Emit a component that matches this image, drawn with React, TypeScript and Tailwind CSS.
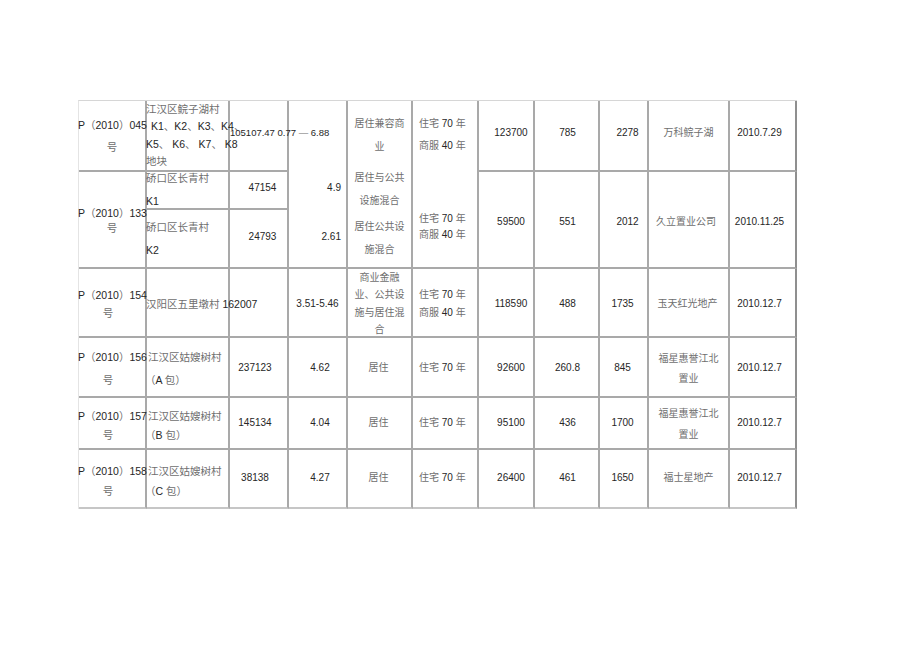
import React from "react";

// split a string into latin / cjk runs so the two scripts get their own tone
const T = ({ t }: { t: string }) => (
  <>
    {t
      .split(/([\x00-\x7f]+)/)
      .filter(Boolean)
      .map((s, i) =>
        /^[\x00-\x7f]+$/.test(s) ? (
          <span key={i} className="text-[#262626]">
            {s}
          </span>
        ) : (
          <span key={i} className="text-[#6e6e6e]">
            {s}
          </span>
        ),
      )}
  </>
);

const line = "border-r-2 border-b-2 border-[#a9a9a9]";

const Cell = ({
  className,
  children,
}: {
  className: string;
  children?: React.ReactNode;
}) => <div className={`${line} flex flex-col whitespace-nowrap ${className}`}>{children}</div>;

const Num = ({ className, v }: { className: string; v: string }) => (
  <Cell className={`items-center justify-center text-[10px] leading-[14px] ${className}`}>
    <T t={v} />
  </Cell>
);

const App = () => {
  return (
    <div className="min-h-[651px] bg-white pt-[100px] pl-[78px] font-['Liberation_Sans','Noto_Sans_CJK_SC',sans-serif]">
      <div className="grid w-fit grid-cols-[68px_83px_59px_59px_65px_66px_56px_65px_49px_81px_67px] grid-rows-[71px_38px_59px_69px_60px_52px_59px] border-t border-l border-t-[#d6d6d6] border-l-[#e4e4e4]">
        {/* row 1 */}
        <Cell className="col-start-1 row-start-1 justify-center text-[10.5px] leading-[22px]">
          <div className="-ml-px">
            <T t="P（2010）045" />
          </div>
          <div className="text-center">
            <T t="号" />
          </div>
        </Cell>
        <Cell className="col-start-2 row-start-1 justify-center text-[10.5px] leading-[17.5px]">
          <div className="-ml-px">
            <T t="江汉区鲩子湖村" />
          </div>
          <div className="pl-[4px]">
            <T t="K1、K2、K3、K4、" />
          </div>
          <div className="-ml-px">
            <T t="K5、 K6、 K7、 K8" />
          </div>
          <div className="-ml-px">
            <T t="地块" />
          </div>
        </Cell>
        <Cell className="col-start-3 row-start-1 justify-center pb-[5px] text-[9.5px] leading-[12px]">
          <div>
            <T t="105107.47 0.77  — 6.88" />
          </div>
        </Cell>
        <Cell className="col-start-4 row-start-1 row-span-3 items-end pt-[80px] pr-[5px] text-[10px] leading-[14px]">
          <div>
            <T t="4.9" />
          </div>
          <div className="mt-[35px]">
            <T t="2.61" />
          </div>
        </Cell>
        <Cell className="col-start-5 row-start-1 row-span-3 items-center pt-[11px] text-[10px] leading-[23px]">
          <div className="text-center">
            <div><T t="居住兼容商" /></div>
            <div><T t="业" /></div>
          </div>
          <div className="mt-[8px] text-center">
            <div><T t="居住与公共" /></div>
            <div><T t="设施混合" /></div>
          </div>
          <div className="mt-[3px] text-center">
            <div><T t="居住公共设" /></div>
            <div><T t="施混合" /></div>
          </div>
        </Cell>
        <Cell className="col-start-6 row-start-1 row-span-3 pt-[12px] pl-[6px] text-[10px]">
          <div className="leading-[22px]">
            <div><T t="住宅 70 年" /></div>
            <div><T t="商服 40 年" /></div>
          </div>
          <div className="mt-[54px] leading-[16px]">
            <div><T t="住宅 70 年" /></div>
            <div><T t="商服 40 年" /></div>
          </div>
        </Cell>
        <Num className="col-start-7 row-start-1 pb-[6px] pl-[10px]" v="123700" />
        <Num className="col-start-8 row-start-1 pb-[6px] pl-[2px]" v="785" />
        <Num className="col-start-9 row-start-1 pb-[6px] pl-[8px]" v="2278" />
        <Num className="col-start-10 row-start-1 pb-[6px]" v="万科鲩子湖" />
        <Num className="col-start-11 row-start-1 pb-[6px] pr-[6px] border-r-[#8f8f8f]" v="2010.7.29" />

        {/* row 2 : two sub rows */}
        <Cell className="col-start-1 row-start-2 row-span-2 justify-center pt-[3px] text-[10.5px] leading-[15px]">
          <div className="-ml-px">
            <T t="P（2010）133" />
          </div>
          <div className="text-center">
            <T t="号" />
          </div>
        </Cell>
        <Cell className="col-start-2 row-start-2 justify-center text-[10.5px] leading-[23px]">
          <div className="-ml-px"><T t="硚口区长青村" /></div>
          <div className="-ml-px"><T t="K1" /></div>
        </Cell>
        <Num className="col-start-3 row-start-2 pb-[4px] pl-[8px]" v="47154" />
        <Cell className="col-start-2 row-start-3 justify-center text-[10.5px] leading-[23px]">
          <div className="-ml-px"><T t="硚口区长青村" /></div>
          <div className="-ml-px"><T t="K2" /></div>
        </Cell>
        <Num className="col-start-3 row-start-3 pb-[3px] pl-[8px]" v="24793" />
        <Num className="col-start-7 row-start-2 row-span-2 pt-[4px] pl-[10px]" v="59500" />
        <Num className="col-start-8 row-start-2 row-span-2 pt-[4px] pl-[2px]" v="551" />
        <Num className="col-start-9 row-start-2 row-span-2 pt-[4px] pl-[8px]" v="2012" />
        <Num className="col-start-10 row-start-2 row-span-2 pt-[4px] pr-[5px]" v="久立置业公司" />
        <Num className="col-start-11 row-start-2 row-span-2 pt-[4px] pr-[6px] border-r-[#8f8f8f]" v="2010.11.25" />

        {/* row 3 */}
        <Cell className="col-start-1 row-start-4 justify-center pt-[2px] text-[10.5px] leading-[18px]">
          <div className="-ml-px"><T t="P（2010）154" /></div>
          <div className="pr-[8px] text-center"><T t="号" /></div>
        </Cell>
        <Cell className="col-start-2 row-start-4 justify-center pt-[2px] text-[10.5px] leading-[14px]">
          <div className="-ml-px"><T t="汉阳区五里墩村 162007" /></div>
        </Cell>
        <Cell className="col-start-3 row-start-4" />
        <Num className="col-start-4 row-start-4 pt-[2px]" v="3.51-5.46" />
        <Cell className="col-start-5 row-start-4 items-center justify-center pt-[2px] text-[10px] leading-[17.5px]">
          <div><T t="商业金融" /></div>
          <div><T t="业、公共设" /></div>
          <div><T t="施与居住混" /></div>
          <div><T t="合" /></div>
        </Cell>
        <Cell className="col-start-6 row-start-4 justify-center pt-[2px] pl-[6px] text-[10px] leading-[18px]">
          <div><T t="住宅 70 年" /></div>
          <div><T t="商服 40 年" /></div>
        </Cell>
        <Num className="col-start-7 row-start-4 pt-[2px] pl-[10px]" v="118590" />
        <Num className="col-start-8 row-start-4 pt-[2px] pl-[2px]" v="488" />
        <Num className="col-start-9 row-start-4 pt-[2px] pr-[2px]" v="1735" />
        <Num className="col-start-10 row-start-4 pt-[2px] pr-[2px]" v="玉天红光地产" />
        <Num className="col-start-11 row-start-4 pt-[2px] pr-[6px] border-r-[#8f8f8f]" v="2010.12.7" />

        {/* rows 4-6 : 姑嫂树村 */}
        {[
          {
            r: "row-start-5",
            no: "P（2010）156",
            pack: "（A 包）",
            lh: "leading-[23px] pt-[4px]",
            pad: "pt-[1px]",
            a: "237123",
            b: "4.62",
            c: "92600",
            d: "260.8",
            e: "845",
            f: ["福星惠誉江北", "置业"],
            flh: "leading-[20px] pt-[3px]",
          },
          {
            r: "row-start-6",
            no: "P（2010）157",
            pack: "（B 包）",
            lh: "leading-[19px] pt-[6px]",
            pad: "",
            a: "145134",
            b: "4.04",
            c: "95100",
            d: "436",
            e: "1700",
            f: ["福星惠誉江北", "置业"],
            flh: "leading-[21px] pt-[2px]",
          },
          {
            r: "row-start-7",
            no: "P（2010）158",
            pack: "（C 包）",
            lh: "leading-[20px] pt-[4px]",
            pad: "pb-[2px]",
            a: "38138",
            b: "4.27",
            c: "26400",
            d: "461",
            e: "1650",
            f: ["福士星地产"],
            flh: "leading-[14px] pb-[2px]",
          },
        ].map((row, i) => {
          const last = i === 2 ? "border-b-[#c6c6c6]" : "";
          return (
            <React.Fragment key={row.no}>
              <Cell className={`col-start-1 ${row.r} ${last} justify-center text-[10.5px] ${row.lh}`}>
                <div className="-ml-px"><T t={row.no} /></div>
                <div className="pr-[8px] text-center"><T t="号" /></div>
              </Cell>
              <Cell className={`col-start-2 ${row.r} ${last} justify-center pl-px text-[10.5px] ${row.lh}`}>
                <div><T t="江汉区姑嫂树村" /></div>
                <div className="-ml-[3px]"><T t={row.pack} /></div>
              </Cell>
              <Num className={`col-start-3 ${row.r} ${last} pr-[7px] ${row.pad}`} v={row.a} />
              <Num className={`col-start-4 ${row.r} ${last} pl-[5px] ${row.pad}`} v={row.b} />
              <Num className={`col-start-5 ${row.r} ${last} pr-[2px] ${row.pad}`} v="居住" />
              <Cell className={`col-start-6 ${row.r} ${last} justify-center pl-[6px] text-[10px] leading-[14px] ${row.pad}`}>
                <div><T t="住宅 70 年" /></div>
              </Cell>
              <Num className={`col-start-7 ${row.r} ${last} pl-[10px] ${row.pad}`} v={row.c} />
              <Num className={`col-start-8 ${row.r} ${last} pl-[2px] ${row.pad}`} v={row.d} />
              <Num className={`col-start-9 ${row.r} ${last} pr-[2px] ${row.pad}`} v={row.e} />
              <Cell className={`col-start-10 ${row.r} ${last} items-center justify-center text-[10px] ${row.flh}`}>
                {row.f.map((s) => (
                  <div key={s}><T t={s} /></div>
                ))}
              </Cell>
              <Num className={`col-start-11 ${row.r} ${last} pr-[6px] border-r-[#8f8f8f] ${row.pad}`} v="2010.12.7" />
            </React.Fragment>
          );
        })}
      </div>
    </div>
  );
};

export default App;
